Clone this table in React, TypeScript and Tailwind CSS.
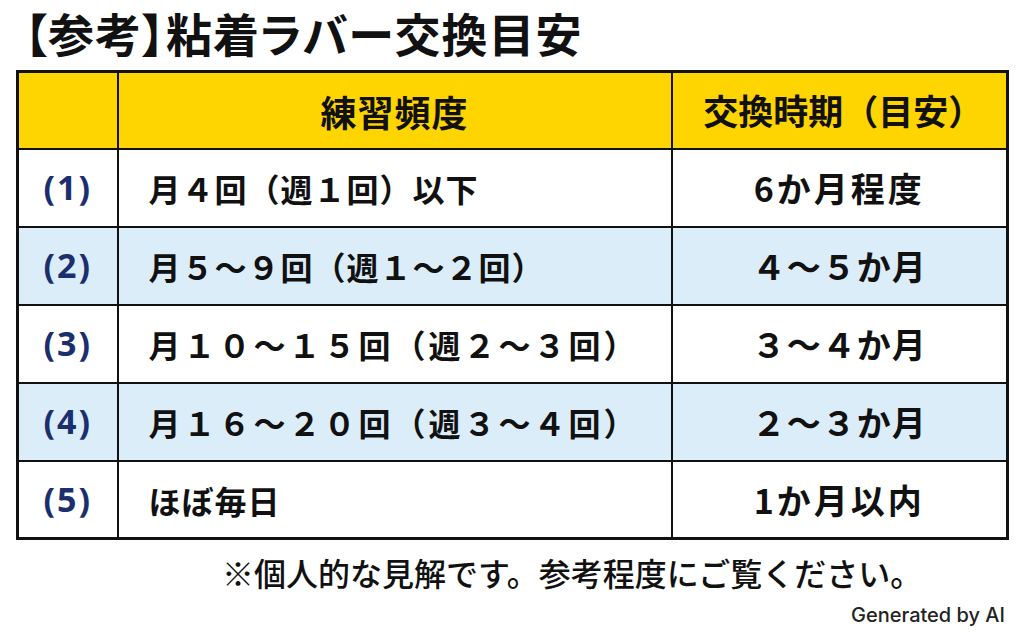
const FONT = "font-['Noto_Sans_CJK_JP','Noto_Sans',sans-serif]";

type Row = { no: string; freq: string; term: string; blue: boolean; wide?: boolean; range?: boolean };

const ROWS: Row[] = [
  { no: "(1)", freq: "月４回（週１回）以下", term: "6か月程度", blue: false },
  { no: "(2)", freq: "月５～９回（週１～２回）", term: "４～５か月", blue: true, range: true },
  { no: "(3)", freq: "月１０～１５回（週２～３回）", term: "３～４か月", blue: false, wide: true, range: true },
  { no: "(4)", freq: "月１６～２０回（週３～４回）", term: "２～３か月", blue: true, wide: true, range: true },
  { no: "(5)", freq: "ほぼ毎日", term: "1か月以内", blue: false },
];

export default function App() {
  return (
    <div className={`w-[1024px] h-[641px] bg-white text-[#111] overflow-hidden ${FONT}`}>
      <h1 className="pl-[24px] text-[46px] leading-[1.4] font-bold tracking-[1px] [font-feature-settings:'palt']">
        【参考】粘着ラバー交換目安
      </h1>

      <table className="ml-[16px] mt-[6px] w-[990px] border-collapse border-[3px] border-[#111] table-fixed">
        <colgroup>
          <col className="w-[100px]" />
          <col className="w-[554px]" />
          <col className="w-[336px]" />
        </colgroup>
        <thead>
          <tr className="h-[77px] bg-[#ffd500]">
            <th className="border-[2.5px] border-[#111]"></th>
            <th className="border-[2.5px] border-[#111] text-[36px] font-bold tracking-[1px]">練習頻度</th>
            <th className="border-[2.5px] border-[#111] pl-[8px] text-[35px] font-bold">交換時期（目安）</th>
          </tr>
        </thead>
        <tbody>
          {ROWS.map((r) => (
            <tr key={r.no} className={`h-[78px] ${r.blue ? "bg-[#dcedfa]" : "bg-white"}`}>
              <td className="border-[2.5px] border-[#111] text-center text-[34px] font-bold tracking-[2px] text-[#1b2f6e] font-['Noto_Sans',sans-serif]">
                {r.no}
              </td>
              <td
                className={`border-[2.5px] border-[#111] pl-[30px] text-[32px] font-bold ${
                  r.wide ? "tracking-[3px]" : "tracking-[1px]"
                }`}
              >
                {r.freq}
              </td>
              <td
                className={`border-[2.5px] border-[#111] text-center text-[34px] font-bold ${
                  r.range ? "tracking-[1px]" : "tracking-[3px]"
                }`}
              >
                {r.term}
              </td>
            </tr>
          ))}
        </tbody>
      </table>

      <p className="mt-[16px] pl-[222px] text-[32px] leading-none font-medium">
        ※個人的な見解です。参考程度にご覧ください。
      </p>

      <div className="mt-[17px] pr-[19px] text-right text-[20px] leading-none font-medium font-['Inter','Noto_Sans',sans-serif] text-[#222]">
        Generated by AI
      </div>
    </div>
  );
}
